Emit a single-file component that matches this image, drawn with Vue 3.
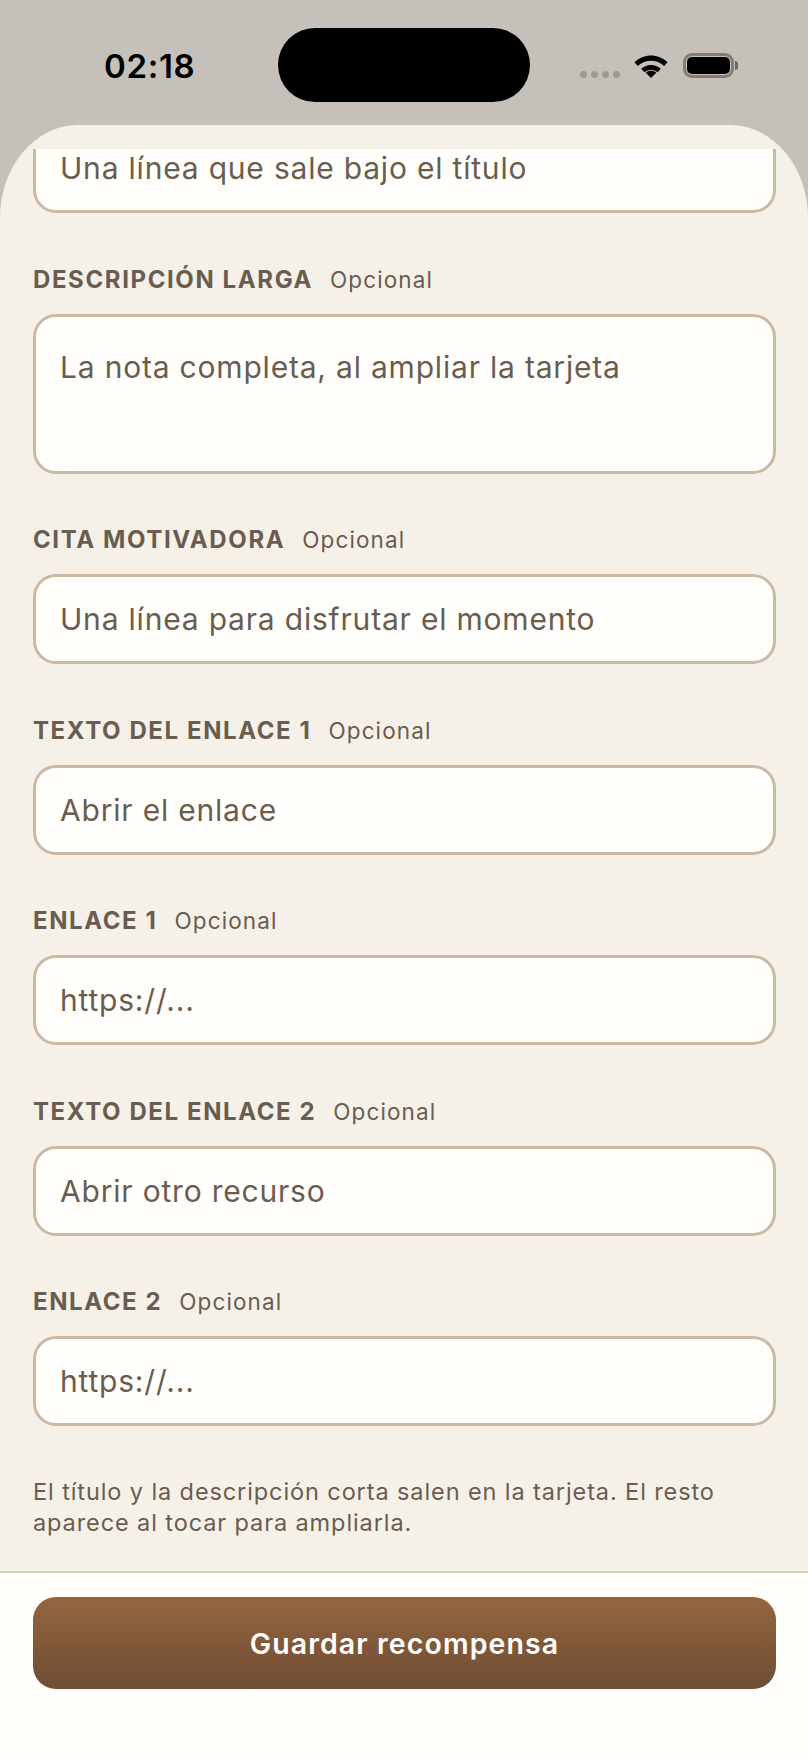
<template>
  <div class="screen">
    <div class="status">
      <span class="time">02:18</span>
      <div class="island"></div>
      <div class="icons">
        <div class="dots"><i></i><i></i><i></i><i></i></div>
        <svg class="wifi" viewBox="0 0 34 25" width="34" height="25">
          <path d="M0.5 9.2C9.8 0.2 24.2 0.2 33.5 9.2L30.2 13C22.8 5.9 11.2 5.9 3.8 13Z" fill="#000" />
          <path d="M7.2 15.8C12.8 10.6 21.2 10.6 26.8 15.8L23.6 19.2C19.8 15.8 14.2 15.8 10.4 19.2Z" fill="#000" />
          <path d="M11.6 19.6C14.8 17 19.2 17 22.4 19.6L17 25Z" fill="#000" />
        </svg>
        <div class="battery"><div class="charge"></div></div>
      </div>
    </div>

    <div class="sheet">
      <div class="scroll">
        <input class="field-input first" type="text" placeholder="Una línea que sale bajo el título" />

        <div v-for="field in fields" :key="field.label" class="field">
          <label class="field-label">
            <span class="name">{{ field.label }}</span>
            <span class="optional">Opcional</span>
          </label>
          <textarea v-if="field.long" class="field-input area" :placeholder="field.hint"></textarea>
          <input v-else class="field-input" type="text" :placeholder="field.hint" />
        </div>

        <p class="note">El título y la descripción corta salen en la tarjeta. El resto aparece al tocar para ampliarla.</p>
      </div>

      <div class="footer">
        <button class="save" type="button">Guardar recompensa</button>
      </div>
    </div>
  </div>
</template>

<script setup>
const fields = [
  { label: 'DESCRIPCIÓN LARGA', hint: 'La nota completa, al ampliar la tarjeta', long: true },
  { label: 'CITA MOTIVADORA', hint: 'Una línea para disfrutar el momento' },
  { label: 'TEXTO DEL ENLACE 1', hint: 'Abrir el enlace' },
  { label: 'ENLACE 1', hint: 'https://...' },
  { label: 'TEXTO DEL ENLACE 2', hint: 'Abrir otro recurso' },
  { label: 'ENLACE 2', hint: 'https://...' },
];
</script>

<style>
html,
body {
  margin: 0;
  background: #c5c0ba;
}
</style>

<style scoped>
.screen {
  width: 808px;
  height: 1758px;
  display: flex;
  flex-direction: column;
  background: #c5c0ba;
  font-family: Inter, "Open Sans", sans-serif;
  overflow: hidden;
}

.status {
  height: 125px;
  flex: none;
  display: flex;
  align-items: flex-start;
  padding: 28px 0 0 104px;
  box-sizing: border-box;
}

.time {
  width: 89px;
  margin-top: 18px;
  font-size: 33px;
  line-height: 40px;
  font-weight: 600;
  letter-spacing: 0.7px;
  color: #000;
  white-space: nowrap;
}

.island {
  width: 252px;
  height: 74px;
  margin-left: 85px;
  border-radius: 37px;
  background: #000;
}

.icons {
  display: flex;
  align-items: center;
  margin: 25px 0 0 50px;
}

.dots {
  display: flex;
  gap: 4px;
  margin-top: 17px;
}

.dots i {
  width: 7px;
  height: 7px;
  border-radius: 50%;
  background: #a09a93;
}

.wifi {
  margin-left: 14px;
}

.battery {
  width: 51px;
  height: 25px;
  margin-left: 15px;
  box-sizing: border-box;
  border: 3px solid #857c72;
  border-radius: 9px;
  padding: 1px;
  position: relative;
}

.battery::after {
  content: "";
  position: absolute;
  right: -7px;
  top: 5px;
  width: 3px;
  height: 9px;
  border-radius: 0 3px 3px 0;
  background: #6f675e;
}

.charge {
  height: 100%;
  border-radius: 5px;
  background: #000;
}

.sheet {
  flex: 1;
  display: flex;
  flex-direction: column;
  min-height: 0;
  padding-top: 24px;
  background: #f5f1e9;
  border-radius: 78px 78px 0 0 / 93px 93px 0 0;
}

.scroll {
  flex: 1;
  min-height: 0;
  overflow: hidden;
  padding: 0 32px 0 33px;
  display: flex;
  flex-direction: column;
}

.field {
  display: flex;
  flex-direction: column;
  gap: 19px;
  margin-top: 51.5px;
}

.field-label {
  display: flex;
  align-items: baseline;
  gap: 17px;
  height: 30px;
  line-height: 30px;
  color: #6a5c4f;
}

.name {
  font-size: 24px;
  font-weight: 700;
  letter-spacing: 1.6px;
}

.optional {
  font-size: 22.5px;
  font-weight: 400;
  letter-spacing: 1.1px;
}

.field-input {
  display: block;
  width: 100%;
  height: 90px;
  flex: none;
  box-sizing: border-box;
  padding: 0 24px;
  border: 3px solid #cbb9a4;
  border-radius: 23px;
  background: #fffefb;
  font-family: inherit;
  font-size: 30px;
  letter-spacing: 0.8px;
  color: #6a5c4f;
  outline: none;
}

.field-input::placeholder {
  color: #6a5c4f;
  opacity: 1;
}

.first {
  margin-top: -26px;
}

.area {
  height: 160px;
  padding-top: 30px;
  line-height: 40px;
  resize: none;
}

.note {
  margin: 50px 0 0;
  font-size: 23.5px;
  line-height: 31px;
  letter-spacing: 0.9px;
  color: #6a5c4f;
}

.footer {
  flex: none;
  height: 187px;
  box-sizing: border-box;
  padding: 24px 32px 0 33px;
  background: #fffefb;
  border-top: 2px solid #d8ccbc;
}

.save {
  display: block;
  width: 100%;
  height: 92px;
  border: none;
  border-radius: 23px;
  background: linear-gradient(180deg, #94663f 0%, #6f4c33 100%);
  color: #fff;
  font-family: inherit;
  font-size: 28.5px;
  font-weight: 600;
  letter-spacing: 1.1px;
}
</style>
